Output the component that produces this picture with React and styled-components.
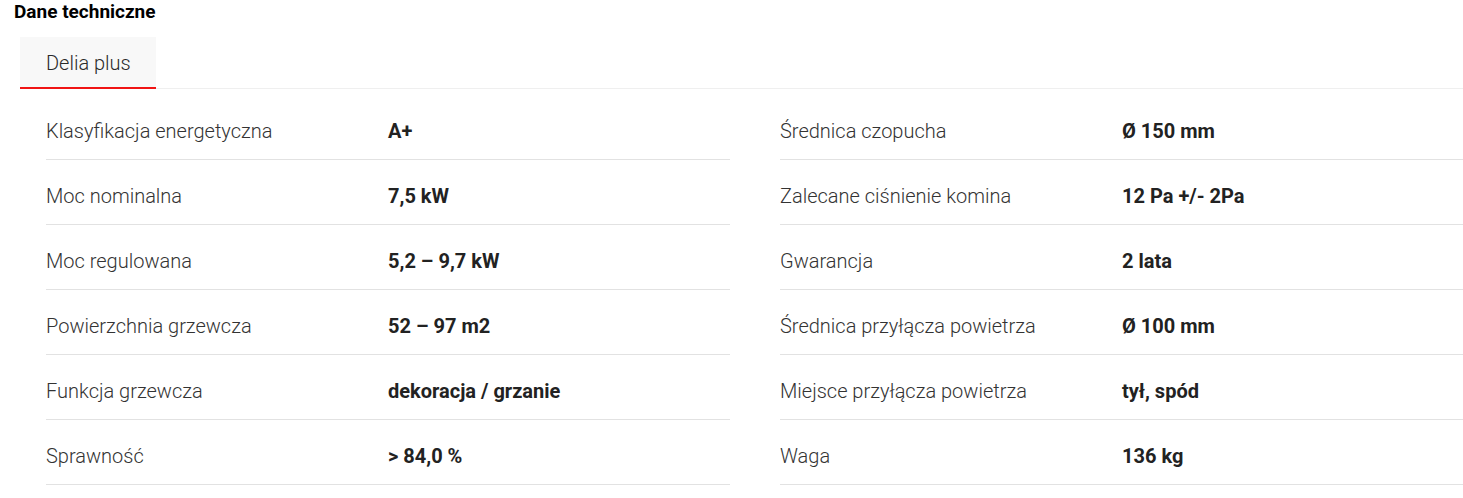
import React from "react";
import styled, { createGlobalStyle } from "styled-components";

const Global = createGlobalStyle`
  html, body { margin: 0; padding: 0; background: #fff; }
  body { font-family: Roboto, "Liberation Sans", Arial, sans-serif; color: #333; }
`;

const Page = styled.div`
  width: 1463px;
  padding: 0 0 0 14px;
  box-sizing: border-box;
`;

const Title = styled.h2`
  margin: 0;
  padding-top: 1px;
  font-size: 19px;
  line-height: 22px;
  font-weight: 700;
  color: #000;
`;

const TabBar = styled.div`
  display: flex;
  margin: 14px 0 0 6px;
  border-bottom: 1px solid #efefef;
`;

const Tab = styled.button`
  font-family: inherit;
  font-size: 20px;
  font-weight: 300;
  color: #2a2a2a;
  background: ${(p) => (p.$active ? "#f8f8f8" : "transparent")};
  border: 0;
  border-bottom: 2px solid ${(p) => (p.$active ? "#f01414" : "transparent")};
  margin-bottom: -1px;
  padding: 14px 25px 12px 26px;
  line-height: 24px;
  cursor: pointer;
`;

const Columns = styled.div`
  display: grid;
  grid-template-columns: 684px 683px;
  column-gap: 50px;
  padding: 6px 0 0 32px;
`;

const Column = styled.div`
  display: flex;
  flex-direction: column;
`;

const Row = styled.div`
  display: grid;
  grid-template-columns: 342px 1fr;
  padding: 24px 0 16px;
  line-height: 24px;
  font-size: 20px;
  border-bottom: 1px solid #e2e2e2;
`;

const Label = styled.span`
  font-weight: 300;
  color: #333;
`;

const Value = styled.span`
  font-weight: 700;
  color: #222;
`;

const left = [
  ["Klasyfikacja energetyczna", "A+"],
  ["Moc nominalna", "7,5 kW"],
  ["Moc regulowana", "5,2 – 9,7 kW"],
  ["Powierzchnia grzewcza", "52 – 97 m2"],
  ["Funkcja grzewcza", "dekoracja / grzanie"],
  ["Sprawność", "> 84,0 %"],
];

const right = [
  ["Średnica czopucha", "Ø 150 mm"],
  ["Zalecane ciśnienie komina", "12 Pa +/- 2Pa"],
  ["Gwarancja", "2 lata"],
  ["Średnica przyłącza powietrza", "Ø 100 mm"],
  ["Miejsce przyłącza powietrza", "tył, spód"],
  ["Waga", "136 kg"],
];

export default function App() {
  return (
    <>
      <Global />
      <Page>
        <Title>Dane techniczne</Title>
        <TabBar>
          <Tab $active>Delia plus</Tab>
        </TabBar>
        <Columns>
          {[left, right].map((col, i) => (
            <Column key={i}>
              {col.map(([l, v]) => (
                <Row key={l}>
                  <Label>{l}</Label>
                  <Value>{v}</Value>
                </Row>
              ))}
            </Column>
          ))}
        </Columns>
      </Page>
    </>
  );
}
